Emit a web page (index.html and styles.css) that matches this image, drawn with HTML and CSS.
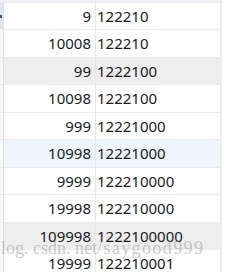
FILE: index.html
```
<!DOCTYPE html>
<html>
<head>
<meta charset="utf-8">
<link rel="stylesheet" href="styles.css">
</head>
<body>
<div class="view">
  <div class="grid">
    <div class="hdr ind"></div><div class="hdr"></div><div class="hdr last"></div>

    <div class="ind cur"><span class="arrow"></span></div><div class="c1">9</div><div class="c2">122210</div>
    <div class="ind"></div><div class="c1">10008</div><div class="c2">122210</div>
    <div class="ind"></div><div class="c1 alt">99</div><div class="c2 alt">1222100</div>
    <div class="ind"></div><div class="c1">10098</div><div class="c2">1222100</div>
    <div class="ind"></div><div class="c1">999</div><div class="c2">12221000</div>
    <div class="ind"></div><div class="c1 hov">10998</div><div class="c2 hov">12221000</div>
    <div class="ind"></div><div class="c1">9999</div><div class="c2">122210000</div>
    <div class="ind"></div><div class="c1">19998</div><div class="c2">122210000</div>
    <div class="ind"></div><div class="c1 alt">109998</div><div class="c2 alt">1222100000</div>
    <div class="ind"></div><div class="c1">19999</div><div class="c2">122210001</div>
  </div>
  <div class="mark">log. csdn. net<span class="tail">/saygood999</span></div>
</div>
</body>
</html>
```
FILE: styles.css
```
html, body {
  margin: 0;
  padding: 0;
  background: #ffffff;
}
.view {
  position: relative;
  width: 242px;
  height: 272px;
  overflow: hidden;
  font-family: "Noto Sans", "Open Sans", sans-serif;
  font-size: 15px;
  color: #1a1a1a;
}
.grid {
  display: grid;
  grid-template-columns: 4px 92px 126px;
  grid-template-rows: 3px repeat(10, 27.45px);
}
.grid > div {
  box-sizing: border-box;
  border-bottom: 1px solid #ebebeb;
  line-height: 20px;
  padding-top: 3px;
}
.grid > .hdr {
  padding-top: 0;
  background: #eef2f7;
  border-right: 1px solid #e4e7eb;
}
.grid > .hdr.last {
  border-right: 2px solid #e8e8e8;
}
.ind {
  background: #f7f7f7;
  border-right: 1px solid #e2e2e2;
  position: relative;
}
.ind.cur {
  background: #dbe8f6;
}
.arrow {
  position: absolute;
  left: 0;
  top: 12px;
  width: 2px;
  height: 3px;
  background: #4a5058;
}
.c1 {
  text-align: right;
  padding-right: 4px;
  border-right: 1px solid #e6e6e6;
}
.c2 {
  padding-left: 1px;
  border-right: 2px solid #ececec;
}
.alt {
  background: #eeeeee;
}
.hov {
  background: #eef5fd;
}
.mark {
  position: absolute;
  left: 1px;
  top: 238px;
  font-family: "Liberation Serif", serif;
  font-size: 18px;
  color: rgba(150, 150, 150, 0.5);
  white-space: nowrap;
}
.tail {
  letter-spacing: 1.4px;
}
```
